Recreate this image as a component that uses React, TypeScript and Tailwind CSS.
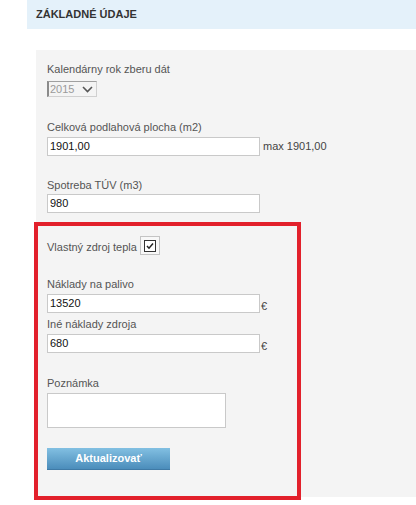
import React from "react";

function Label({ children, className = "" }: { children: React.ReactNode; className?: string }) {
  return <div className={`h-[14px] leading-[14px] text-[11px] text-[#555] whitespace-nowrap ${className}`}>{children}</div>;
}

function TextInput({ value, w = "w-[213px]" }: { value: string; w?: string }) {
  return (
    <div className={`${w} h-[19px] bg-white border border-[#c9c9c9] flex items-center pl-[2px] text-[11px] text-[#111]`}>
      {value}
    </div>
  );
}

export default function App() {
  return (
    <div className="relative w-[416px] h-[505px] bg-white overflow-hidden" style={{ fontFamily: '"Liberation Sans", Arial, sans-serif' }}>
      <div className="ml-[27px] h-[29px] bg-[#e4f1fa] pl-[9px] flex items-center text-[11px] font-bold text-[#333]">
        ZÁKLADNÉ ÚDAJE
      </div>
      <div className="mt-[21px] ml-[36px] h-[447px] bg-[#f4f4f4] pl-[11px] pt-[12px] flex flex-col items-start">
        <Label>Kalendárny rok zberu dát</Label>
        <div className="mt-[5px] w-[50px] h-[16px] bg-[#f4f4f4] border border-[#d0d0d0] border-l-[#8a8a8a] border-t-[#a0a0a0] border-l-2 flex items-center justify-between pl-[1px] pr-[3px] text-[11px] text-[#9a9a9a]">
          <span>2015</span>
          <svg width="11" height="7" viewBox="0 0 11 7">
            <path d="M1 1 L5.5 5.5 L10 1" fill="none" stroke="#555" strokeWidth="1.6" />
          </svg>
        </div>
        <Label className="mt-[23px]">Celková podlahová plocha (m2)</Label>
        <div className="mt-[3px] flex items-center gap-[3px]">
          <TextInput value="1901,00" />
          <span className="text-[11px] text-[#444]">max 1901,00</span>
        </div>
        <Label className="mt-[22px]">Spotreba TÚV (m3)</Label>
        <div className="mt-[2px]">
          <TextInput value="980" />
        </div>
        <div className="mt-[23px] flex items-center gap-[3px] h-[19px]">
          <span className="text-[11px] text-[#555] mt-[3px]">Vlastný zdroj tepla</span>
          <div className="w-[20px] h-[19px] border border-[#c4c4c4] bg-[#f8f8f8] flex items-center justify-center">
            <div className="w-[12px] h-[12px] border border-[#333] bg-white flex items-center justify-center">
              <svg width="10" height="10" viewBox="0 0 10 10">
                <path d="M2 5 L4 7.2 L8 2.5" fill="none" stroke="#222" strokeWidth="1.5" />
              </svg>
            </div>
          </div>
        </div>
        <Label className="mt-[22px]">Náklady na palivo</Label>
        <div className="mt-[3px] flex items-end gap-[1px]">
          <TextInput value="13520" />
          <span className="text-[11px] text-[#444] leading-[14px]">€</span>
        </div>
        <Label className="mt-[4px]">Iné náklady zdroja</Label>
        <div className="mt-[3px] flex items-end gap-[1px]">
          <TextInput value="680" />
          <span className="text-[11px] text-[#444] leading-[14px]">€</span>
        </div>
        <Label className="mt-[23px]">Poznámka</Label>
        <div className="mt-[3px] w-[179px] h-[35px] bg-white border border-[#c9c9c9]" />
        <div className="mt-[20px] w-[123px] h-[22px] bg-gradient-to-b from-[#82c0e2] to-[#4b8dbb] border-b border-[#3f7aa6] flex items-center justify-center text-[11px] font-bold text-white">
          Aktualizovať
        </div>
      </div>
      <div className="absolute left-[34px] top-[222px] w-[267px] h-[278px] border-[4px] border-[#e2202b]" />
    </div>
  );
}
